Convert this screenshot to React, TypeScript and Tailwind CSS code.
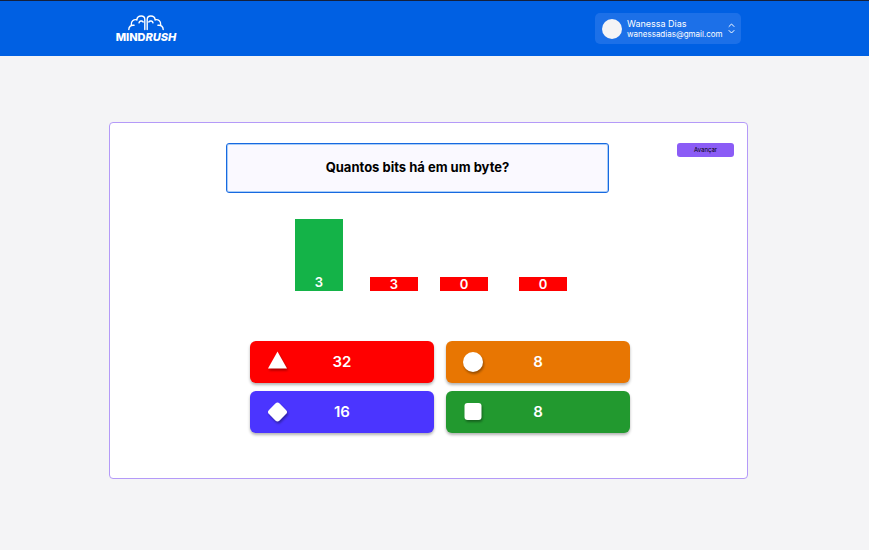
import type { ReactNode } from "react";

type Answer = { label: string; color: string; shape: ReactNode };

const answers: Answer[] = [
  {
    label: "32",
    color: "bg-[#ff0000]",
    shape: <path d="M14.500 3.500 24 20.500H5Z" />,
  },
  {
    label: "8",
    color: "bg-[#e87602]",
    shape: <circle cx="14" cy="14" r="10" />,
  },
  {
    label: "16",
    color: "bg-[#4b35ff]",
    shape: <rect x="7" y="6.500" width="15" height="15" rx="3" transform="rotate(45 14.500 14)" />,
  },
  {
    label: "8",
    color: "bg-[#22992f]",
    shape: <rect x="5.500" y="5" width="17" height="17" rx="3" />,
  },
];

const results = [
  { votes: 3, style: "h-[72px] bg-[#14b348] pb-0.5" },
  { votes: 3, style: "ml-[27px] h-3.5 bg-[#ff0000]" },
  { votes: 0, style: "ml-[22px] h-3.5 bg-[#ff0000]" },
  { votes: 0, style: "ml-[31px] h-3.5 bg-[#ff0000]" },
];

const hemisphere =
  "M.8 14.500C.8 11.500 3 9.800 6 10.300M3.300 9.800C2.800 6.300 5.500 4 9 4.800M8.800 5C9 2.500 11 1 13.200 1 15.500 1 16.800 2.500 16.800 4.500V14.500M11 7.800C11.300 5.800 14 5.300 15.200 7";

function Logo() {
  return (
    <a href="#" aria-label="Mindrush" className="flex w-[62px] flex-col items-center text-white">
      <svg
        viewBox="0 0 36 16"
        className="h-4 w-9"
        fill="none"
        stroke="currentColor"
        strokeWidth="1.4"
        strokeLinecap="round"
        aria-hidden="true"
      >
        <path d={hemisphere} />
        <path d={hemisphere} transform="matrix(-1 0 0 1 36 0)" />
      </svg>
      <span className="text-[11px] leading-[12px] font-extrabold">
        MIND<em>RUSH</em>
      </span>
    </a>
  );
}

function AccountMenu() {
  return (
    <button
      type="button"
      className="flex h-[31px] w-[146px] items-center rounded-[5px] bg-[#1c70e8] pr-1.5 pl-[7px] text-left text-white"
    >
      <span className="size-5 shrink-0 rounded-full bg-[#f4f4f6]" />
      <span className="ml-[5px] flex flex-1 flex-col whitespace-nowrap">
        <span className="text-[9px] leading-[11px]">Wanessa Dias</span>
        <span className="text-[8px] leading-[10px]">wanessadias@gmail.com</span>
      </span>
      <svg
        viewBox="0 0 7 11"
        className="h-[11px] w-[7px] shrink-0"
        fill="none"
        stroke="currentColor"
        strokeLinecap="round"
        strokeLinejoin="round"
        aria-hidden="true"
      >
        <path d="m1 3.500 2.500-2.500L6 3.500M1 7.500 3.500 10 6 7.500" />
      </svg>
    </button>
  );
}

export default function App() {
  return (
    <div className="min-h-screen bg-[#f4f4f6] font-['Inter',sans-serif]">
      <header className="flex h-14 items-center justify-between border-t border-[#14203c] bg-[#0060e3] pr-32 pl-[115px]">
        <Logo />
        <AccountMenu />
      </header>

      <main className="pt-[66px] pr-[121px] pb-[71px] pl-[109px]">
        <section className="rounded border border-[#b49af8] bg-white pt-5 pr-[13px] pb-[45px] pl-[116px]">
          <div className="flex items-start gap-[68px]">
            <h1 className="flex h-[50px] flex-1 items-center justify-center rounded-[3px] border border-[#1769e0] bg-[#faf9ff] text-[13px] font-bold text-black ring-1 ring-[#a9cdf8] ring-inset">
              Quantos bits há em um byte?
            </h1>
            <button
              type="button"
              className="h-3.5 w-[57px] rounded-[3px] bg-[#8b5cf6] text-[6px] leading-3.5 text-black"
            >
              Avançar
            </button>
          </div>

          <div className="mt-[26px] flex h-[72px] items-end pl-[69px]">
            {results.map((result, index) => (
              <div
                key={index}
                className={`flex w-12 items-end justify-center text-[13px] leading-3.5 font-semibold text-white ${result.style}`}
              >
                {result.votes}
              </div>
            ))}
          </div>

          <div className="mt-[50px] mr-[104px] ml-6 grid grid-cols-2 gap-x-3 gap-y-2">
            {answers.map((answer, index) => (
              <button
                key={index}
                type="button"
                className={`grid h-[42px] grid-cols-[28px_1fr_28px] items-center rounded-md px-[13px] text-[15px] font-semibold text-white shadow-[0_2px_3px_rgba(0,0,0,0.3)] ${answer.color}`}
              >
                <svg
                  viewBox="0 0 28 28"
                  className="size-7 overflow-visible fill-white drop-shadow-[1px_2px_1px_rgba(0,0,0,0.35)]"
                  aria-hidden="true"
                >
                  {answer.shape}
                </svg>
                <span>{answer.label}</span>
              </button>
            ))}
          </div>
        </section>
      </main>
    </div>
  );
}
